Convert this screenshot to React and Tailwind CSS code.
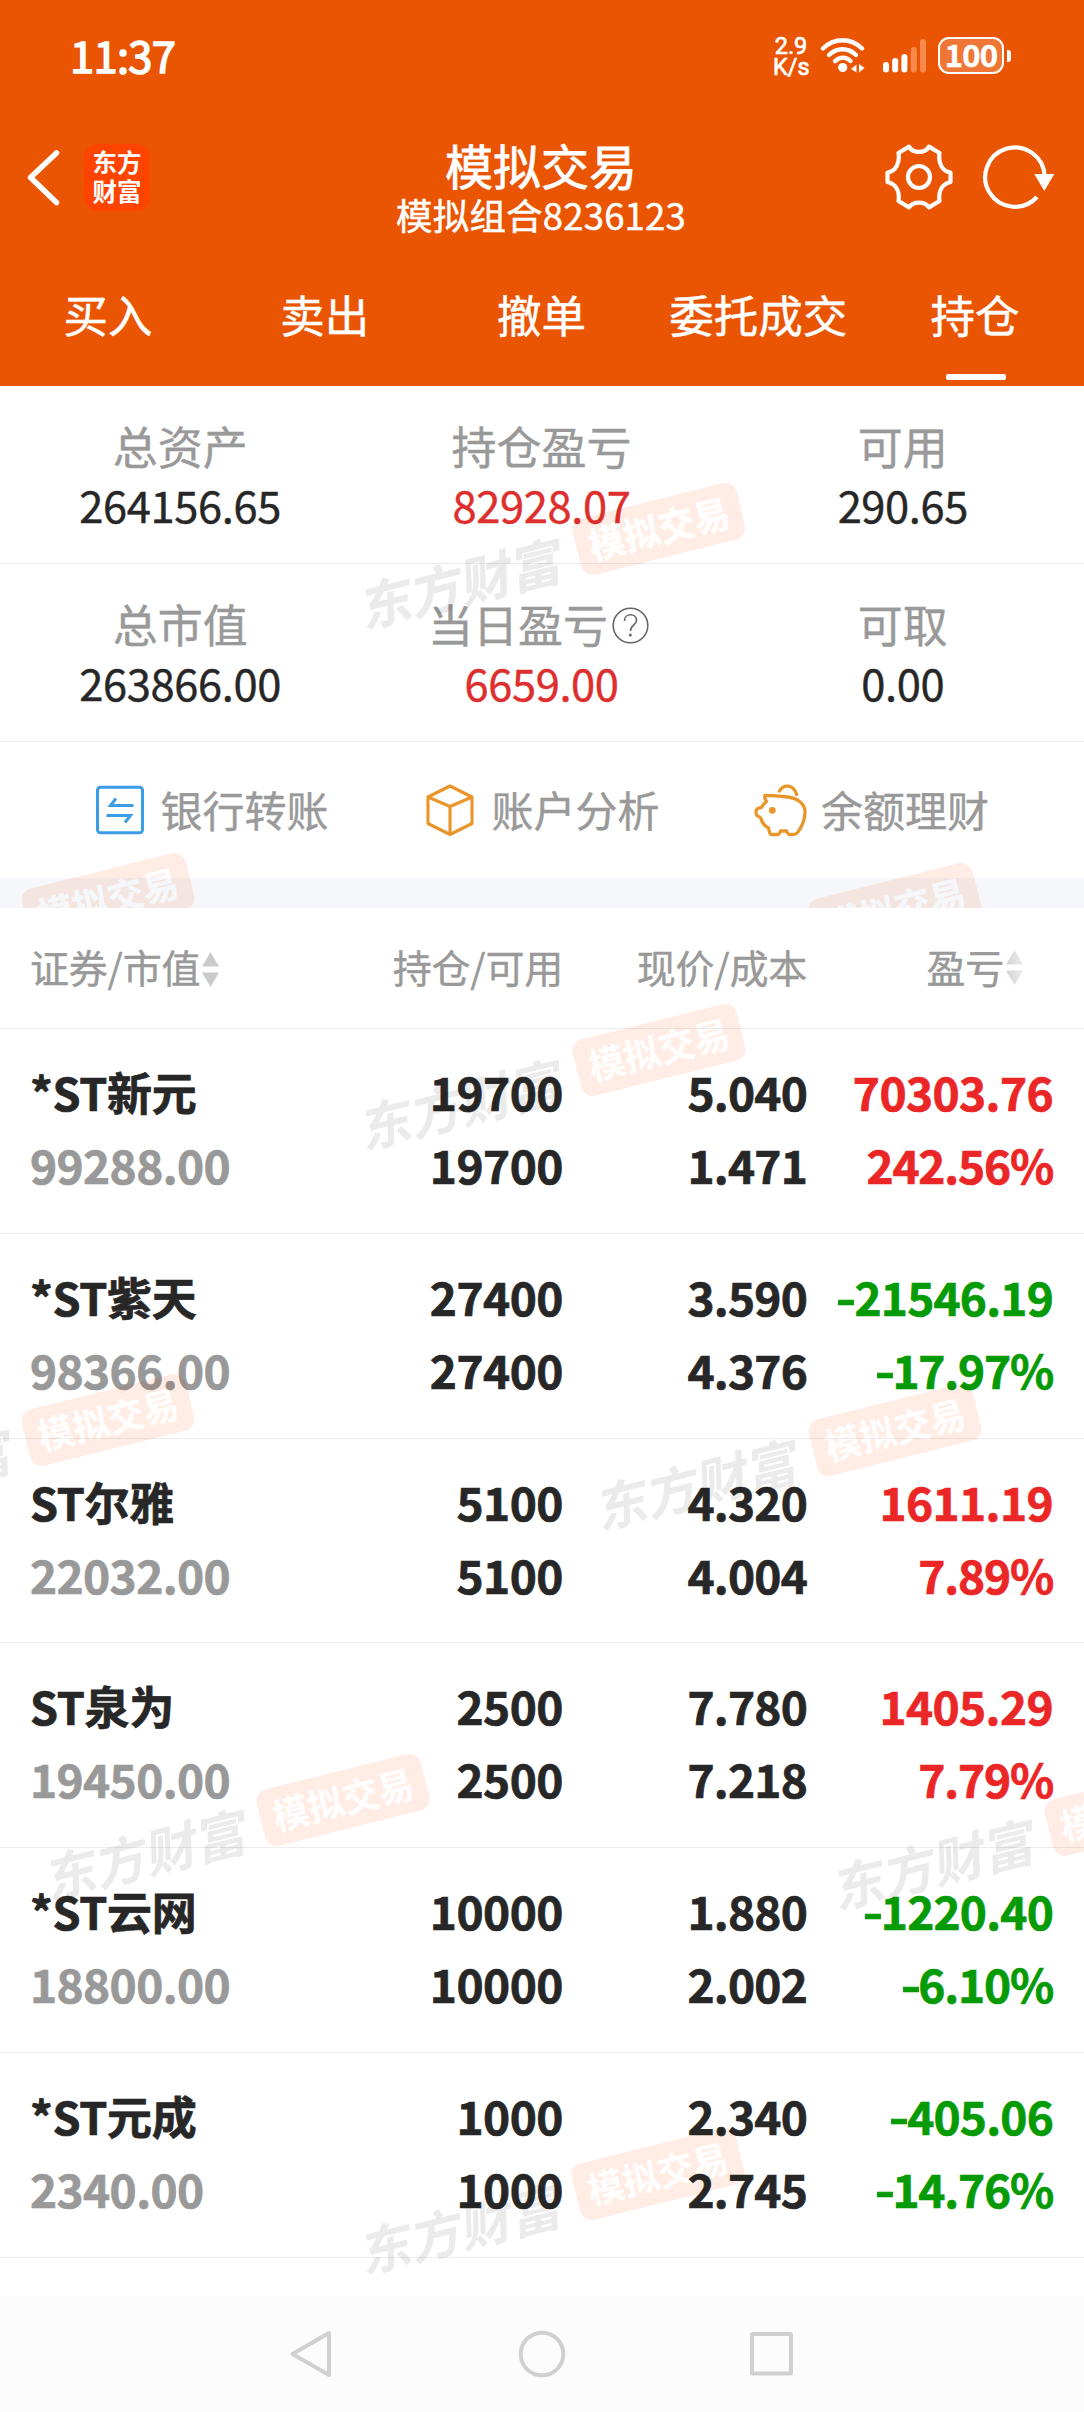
import React from "react";

const FONT = "font-['Noto_Sans_CJK_SC','Noto_Sans',sans-serif]";

const TABS = ["买入", "卖出", "撤单", "委托成交", "持仓"];

const STATS = [
  [
    { label: "总资产", value: "264156.65" },
    { label: "持仓盈亏", value: "82928.07", red: true },
    { label: "可用", value: "290.65" },
  ],
  [
    { label: "总市值", value: "263866.00" },
    { label: "当日盈亏", value: "6659.00", red: true, help: true },
    { label: "可取", value: "0.00" },
  ],
];

const HOLDINGS = [
  { name: "*ST新元", market: "99288.00", qty: "19700", price: "5.040", cost: "1.471", pl: "70303.76", pct: "242.56%" },
  { name: "*ST紫天", market: "98366.00", qty: "27400", price: "3.590", cost: "4.376", pl: "-21546.19", pct: "-17.97%" },
  { name: "ST尔雅", market: "22032.00", qty: "5100", price: "4.320", cost: "4.004", pl: "1611.19", pct: "7.89%" },
  { name: "ST泉为", market: "19450.00", qty: "2500", price: "7.780", cost: "7.218", pl: "1405.29", pct: "7.79%" },
  { name: "*ST云网", market: "18800.00", qty: "10000", price: "1.880", cost: "2.002", pl: "-1220.40", pct: "-6.10%" },
  { name: "*ST元成", market: "2340.00", qty: "1000", price: "2.340", cost: "2.745", pl: "-405.06", pct: "-14.76%" },
];

function WifiIcon() {
  return (
    <svg width="46" height="36" viewBox="0 0 46 36" fill="none" stroke="#fff" strokeWidth="4.4" strokeLinecap="round">
      <path d="M3 11.5C14 0.5 31 0.5 42 11.5" />
      <path d="M9 18C17 10.3 28 10.3 36 18" />
      <path d="M15 24C20 19.6 26 19.6 30.5 24" />
      <circle cx="22.7" cy="30.5" r="4.6" fill="#fff" stroke="none" />
      <path d="M31 32L36.5 27.5V35.5ZM44.5 31L39 27V35.5Z" fill="#fff" stroke="none" />
    </svg>
  );
}

function SignalIcon() {
  return (
    <svg width="44" height="34" viewBox="0 0 44 34" fill="#fff">
      <rect x="0" y="23" width="6" height="10.5" rx="3" />
      <rect x="9.2" y="19" width="6" height="14.5" rx="3" />
      <rect x="18.4" y="15" width="6" height="18.5" rx="3" />
      <rect x="27.8" y="8" width="6" height="25.5" rx="3" fill="#f98a4e" />
      <rect x="37" y="0" width="6" height="33.5" rx="3" fill="#f98a4e" />
    </svg>
  );
}

function GearIcon() {
  return (
    <svg width="68" height="66" viewBox="0 0 68 66" fill="none" stroke="#fff" strokeWidth="4.2" strokeLinejoin="round">
      <path d="M24 2.6C28 9.6 40 9.6 44 2.6L54.5 9C53 19 57 27 65.5 28.5V38C57 40 53 47 54.5 57L44 63.4C40 57 28 57 24 63.4L13.5 57C15 47 11 40 2.5 38V28.5C11 27 15 19 13.5 9Z" />
      <circle cx="34" cy="33" r="11" />
    </svg>
  );
}

function RefreshIcon() {
  return (
    <svg width="76" height="66" viewBox="0 0 76 66" fill="none">
      <path d="M57 53A29.7 29.7 0 1 1 64.6 32" stroke="#fff" strokeWidth="4.2" />
      <path d="M54.3 30H74.3L64.3 47Z" fill="#fff" />
    </svg>
  );
}

function TransferIcon() {
  return (
    <svg width="48" height="50" viewBox="0 0 48 50" fill="none" stroke="#3b9de6" strokeWidth="3">
      <rect x="1.5" y="2.2" width="45" height="45.6" rx="3" />
      <path d="M37.5 20.5H14.5L20 13.5" />
      <path d="M10.5 30.5H34.5L29 37.5" />
    </svg>
  );
}

function CubeIcon() {
  return (
    <svg width="48" height="52" viewBox="0 0 48 52" fill="none" stroke="#e8952a" strokeWidth="3.1" strokeLinejoin="round">
      <path d="M24 2L46 13V39.5L24 50.5L2 39.5V13Z" />
      <path d="M2 13L24 22.5L46 13M24 22.5V50.5" />
    </svg>
  );
}

function PiggyIcon() {
  return (
    <svg width="55" height="54" viewBox="0 0 55 54" fill="none" stroke="#e8952a" strokeWidth="3.3" strokeLinejoin="round" strokeLinecap="round">
      <path d="M12 12.5L20 12.7L35 14C44 15.5 52 20 52 29C52 37 49 43 46 47.5C44 51 42 51.8 39 51.5H36C35 51.3 34 49 33.5 48H27.5C27 49 26.5 51.3 25.5 51.5H18.5C16 51.3 16.5 48 15.5 45C12.5 43.5 9.8 40.5 8.5 37.5C8 35.5 8 34 5.5 33.5C3.5 33 3 31 3 28.5C3 25.5 5 25.3 8.5 24.5C9.5 22 11 20.5 13.5 18.5C12 16.5 11 14.5 12 12.5Z" />
      <path d="M26.5 8C30 1.5 40 0.5 43.7 11.5" />
      <circle cx="19.3" cy="27.3" r="3.4" fill="#e8952a" stroke="none" />
    </svg>
  );
}

function SortIcon({ faded }) {
  return (
    <svg width="17" height="35" viewBox="0 0 17 35">
      <defs>
        <linearGradient id="sortFade" x1="0" x2="1">
          <stop offset="0" stopColor="#d3d3d3" />
          <stop offset="1" stopColor="#ececec" />
        </linearGradient>
      </defs>
      <path d="M8.5 0L17 14.5H0ZM8.5 35L17 20.5H0Z" fill={faded ? "url(#sortFade)" : "#cbcbcb"} />
    </svg>
  );
}

/* Tilted brand stamp multiplied over the content; x / y give the centre of its pill. */
function Watermark({ x, y }) {
  return (
    <div className="pointer-events-none absolute z-10 mix-blend-multiply" style={{ left: x, top: y }}>
      <div className="absolute flex h-[60px] w-[216px] -translate-x-1/2 -translate-y-1/2 items-center justify-center" style={{ left: -195, top: 52 }}>
        <span className="-rotate-[14deg] -skew-x-[12deg] whitespace-nowrap text-[51.5px] leading-[60px] font-bold text-[#ebebeb]">东方财富</span>
      </div>
      <div className="absolute flex h-[58px] w-[169px] -translate-x-1/2 -translate-y-1/2 -rotate-[14deg] items-center justify-center rounded-[12px] bg-[#ffede5]">
        <span className="-mt-[4px] text-[36px] leading-[50px] font-bold whitespace-nowrap text-white">模拟交易</span>
      </div>
    </div>
  );
}

function Figure({ children }) {
  const negative = children.startsWith("-");
  return (
    <>
      {negative && <span className="-mr-px inline-block origin-right scale-x-[1.2]">-</span>}
      {negative ? children.slice(1) : children}
    </>
  );
}

function Header() {
  return (
    <header className="h-[386px] bg-[#ea5504] text-white [-webkit-text-stroke:0.5px]">
      <div className="flex h-[108px] items-start justify-between pr-[73px] pl-[70px]">
        <span className="pt-[25px] text-[43.5px] leading-[60px] tracking-[-0.7px] [-webkit-text-stroke:1.5px]">11:37</span>
        <div className="flex pt-[34px]">
          <div className="w-[36px] pt-[2px] text-center font-['Roboto',sans-serif] text-[23.5px] leading-[21px] [-webkit-text-stroke:0.7px]">
            <div>2.9</div>
            <div>K/s</div>
          </div>
          <div className="ml-[11px] pt-[3px]"><WifiIcon /></div>
          <div className="ml-[17px] pt-[5px]"><SignalIcon /></div>
          <div className="ml-[11px] flex items-start pt-[3px]">
            <div className="flex h-[37px] w-[66px] items-center justify-center rounded-[11px] border-[2.5px] border-white bg-white/20">
              <span className="-mt-[4px] text-[31px] leading-[34px] font-bold tracking-[-0.8px]">100</span>
            </div>
            <div className="mt-[13px] ml-[3px] h-[12px] w-[4px] rounded-r-[3px] bg-white" />
          </div>
        </div>
      </div>

      <div className="flex h-[138px] items-start">
        <div className="flex w-[200px] pt-[36px] pl-[25px]">
          <svg width="36" height="67" viewBox="0 0 36 67" fill="none" stroke="#fff" strokeWidth="5.5" strokeLinecap="round" strokeLinejoin="round">
            <path d="M31.5 9L5.5 33.5L31.5 58.5" />
          </svg>
          <div className="ml-[23px] flex h-[67px] w-[66px] flex-col items-center justify-center rounded-[14px] bg-[#ff4400] pb-[3px] text-[24.5px] leading-[29px] font-bold [-webkit-text-stroke:0]">
            <span>东方</span>
            <span>财富</span>
          </div>
        </div>
        <div className="-ml-[2px] flex-1 pt-[28px] text-center">
          <h1 className="text-[48px] leading-[56px] [-webkit-text-stroke:0.8px]">模拟交易</h1>
          <div className="pt-[1px] text-[36.5px] leading-[44px] tracking-[0.2px]">模拟组合8236123</div>
        </div>
        <div className="flex w-[200px] pt-[36px]">
          <div className="ml-[1px]"><GearIcon /></div>
          <div className="ml-[27px]"><RefreshIcon /></div>
        </div>
      </div>

      <nav className="grid h-[140px] grid-cols-5">
        {TABS.map((tab, i) => (
          <div key={tab} className="flex flex-col items-center text-[44.5px] leading-[136px] whitespace-nowrap">
            <span className="-ml-px">{tab}</span>
            {i === 4 && <div className="-mt-[8px] h-[6px] w-[60px] rounded-[2px] bg-white" />}
          </div>
        ))}
      </nav>
    </header>
  );
}

function Summary() {
  return (
    <section className="relative overflow-hidden bg-white [-webkit-text-stroke:0.4px]">
      {STATS.map((row, r) => (
        <div key={r} className="grid h-[178px] grid-cols-3 border-b border-[#ececec] pt-[30px] text-center">
          {row.map((s) => (
            <div key={s.label} className="-ml-px">
              <div className={`flex items-center justify-center text-[45px] leading-[60px] text-[#999] ${s.help ? "-ml-[6px]" : ""}`}>
                {s.label}
                {s.help && (
                  <svg className="mt-[2px] ml-[4px]" width="37" height="37" viewBox="0 0 37 37" fill="none" stroke="#666" strokeWidth="1.6">
                    <circle cx="18.5" cy="18.5" r="17.3" />
                    <path d="M12.5 14C12.5 5.5 24.5 6 24.5 13.5C24.5 18 18.5 18 18.5 24" />
                    <circle cx="18.3" cy="28" r="1.5" fill="#666" stroke="none" />
                  </svg>
                )}
              </div>
              <div className={`text-[43.5px] leading-[58px] tracking-[-0.4px] ${s.red ? "text-[#dc2f2e]" : "text-[#272727]"}`}>{s.value}</div>
            </div>
          ))}
        </div>
      ))}
      <div className="grid h-[136px] grid-cols-3 px-[47px] text-[42px] text-[#999]">
        <div className="flex items-center justify-center gap-[16px] pl-[1px]"><TransferIcon /><span className="-mt-[3px]">银行转账</span></div>
        <div className="flex items-center justify-center gap-[17px] pl-[2px]"><CubeIcon /><span className="-mt-[3px]">账户分析</span></div>
        <div className="flex items-center justify-center gap-[13px] pr-[2px]"><PiggyIcon /><span className="-mt-[3px]">余额理财</span></div>
      </div>
      <div className="h-[30px] bg-[#f5f7fa]" />
      <Watermark x={658.5} y={143} />
      <Watermark x={108} y={513} />
      <Watermark x={894.5} y={523} />
    </section>
  );
}

function Holdings() {
  return (
    <section className="relative h-[1388px] overflow-hidden bg-white">
      <div className="grid h-[121px] grid-cols-[270px_262px_244px_246px] items-center border-b border-[#ececec] px-[31px] pb-[4px] text-right text-[39px] tracking-[-0.2px] text-[#999] [-webkit-text-stroke:0.4px]">
        <div className="-ml-px flex items-center gap-[2px]">证券/市值<span className="mt-[7px]"><SortIcon /></span></div>
        <div>持仓/可用</div>
        <div>现价/成本</div>
        <div className="flex items-center justify-end gap-[2px] pr-[30px]">盈亏<span className="mt-[3px]"><SortIcon faded /></span></div>
      </div>
      {HOLDINGS.map((h) => (
        <div
          key={h.name}
          className="grid h-[204.83px] grid-cols-[270px_262px_244px_246px] border-b border-[#ececec] px-[31px] pt-[26px] text-right text-[46px] leading-[73px] font-bold tracking-[-0.5px] text-[#272727] [-webkit-text-stroke:0.7px]"
        >
          <div className="-ml-px text-left">
            <div className="text-[45px] tracking-[-0.3px]">{h.name}</div>
            <div className="tracking-[-0.6px] text-[#999]">{h.market}</div>
          </div>
          <div><div>{h.qty}</div><div>{h.qty}</div></div>
          <div className="tracking-[-0.8px]"><div>{h.price}</div><div>{h.cost}</div></div>
          <div className={h.pl.startsWith("-") ? "tracking-[-0.8px] text-[#069b06]" : "tracking-[-0.6px] text-[#eb2626]"}>
            <div><Figure>{h.pl}</Figure></div>
            <div className="tracking-[-1.2px]"><Figure>{h.pct}</Figure></div>
          </div>
        </div>
      ))}
      <Watermark x={658.5} y={142} />
      <Watermark x={108} y={512} />
      <Watermark x={894.5} y={522} />
      <Watermark x={343} y={892} />
      <Watermark x={1131} y={901.5} />
      <Watermark x={658} y={1266} />
    </section>
  );
}

function NavBar() {
  return (
    <footer className="flex h-[116px] items-start bg-[#fcfcfc] pt-[33px] pl-[288px]">
      <svg width="508" height="50" viewBox="0 0 508 50" fill="none" stroke="#d0d0d0" strokeWidth="4" strokeLinejoin="round">
        <path d="M41 4V46L4.5 25Z" />
        <circle cx="254" cy="25" r="21.3" />
        <rect x="464" y="5" width="39" height="39.5" rx="1" />
      </svg>
    </footer>
  );
}

export default function App() {
  return (
    <div className={`h-[2412px] w-[1084px] overflow-hidden bg-white ${FONT}`}>
      <Header />
      <Summary />
      <Holdings />
      <NavBar />
    </div>
  );
}
